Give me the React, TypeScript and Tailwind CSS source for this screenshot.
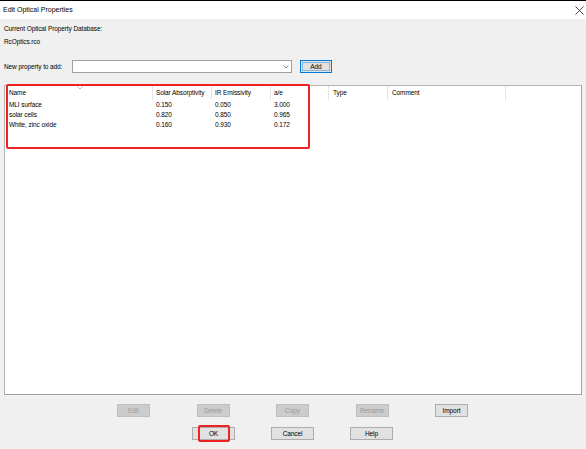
import React from "react";

const cols = [
  { name: "Name", w: 148, pl: 4 },
  { name: "Solar Absorptivity", w: 59, pl: 3 },
  { name: "IR Emissivity", w: 59, pl: 3 },
  { name: "a/e", w: 58, pl: 3 },
  { name: "Type", w: 59, pl: 4 },
  { name: "Comment", w: 118, pl: 4 },
];

const rows = [
  ["MLI surface", "0.150", "0.050", "3.000"],
  ["solar cells", "0.820", "0.850", "0.965"],
  ["White, zinc oxide", "0.160", "0.930", "0.172"],
];

function Btn({ label, disabled, w = 33 }: { label: string; disabled?: boolean; w?: number }) {
  return (
    <div
      style={{ width: w }}
      className={
        "h-[13px] flex items-center justify-center border " +
        (disabled
          ? "bg-[#cccccc] border-[#bfbfbf] text-[#9a9a9a]"
          : "bg-[#e1e1e1] border-[#adadad] text-black")
      }
    >
      {label}
    </div>
  );
}

export default function App() {
  return (
    <div
      className="w-[586px] h-[449px] bg-[#f0f0f0] flex flex-col overflow-hidden text-[6.5px] tracking-[-0.1px] text-black"
      style={{ fontFamily: '"Liberation Sans", Arial, sans-serif' }}
    >
      <div className="h-px bg-black" />
      <div className="h-[18px] bg-white flex items-center justify-between pl-[3px] pr-[3px]">
        <span className="text-[7px] tracking-normal">Edit Optical Properties</span>
        <svg width="9" height="9" viewBox="0 0 9 9" className="-mr-[1px]">
          <path d="M0.5 0.5 L8.5 8.5 M8.5 0.5 L0.5 8.5" stroke="#333" strokeWidth="0.9" />
        </svg>
      </div>
      <div className="flex flex-col pl-[4px] pr-[4px]">
        <div className="mt-[5px] h-[10px] leading-[10px]">Current Optical Property Database:</div>
        <div className="mt-[3px] h-[10px] leading-[10px]">RcOptics.rco</div>
        <div className="mt-[13px] h-[13px] flex items-center">
          <span className="w-[68px]">New property to add:</span>
          <div className="w-[220px] h-[13px] bg-white border border-[#a0a0a0] flex items-center justify-end pr-[2px]">
            <svg width="6" height="4" viewBox="0 0 6 4">
              <path d="M0.5 0.5 L3 3 L5.5 0.5" fill="none" stroke="#555" strokeWidth="0.7" />
            </svg>
          </div>
          <div className="ml-[8px] w-[32px] h-[13px] border border-[#0078d7] bg-[#e1e1e1] flex items-center justify-center">
            <div className="w-[28px] h-[9px] border border-[#0078d7]/40 flex items-center justify-center">Add</div>
          </div>
        </div>
        <div className="relative mt-[12px] w-[578px] h-[310px] bg-white border border-[#b4b4b4] border-r-[#a0a0a0] border-b-[#a0a0a0]">
          <div className="flex h-[14px] items-center">
            {cols.map((c) => (
              <div
                key={c.name}
                style={{ width: c.w, paddingLeft: c.pl }}
                className="h-full flex items-center border-r border-[#e5e5e5]"
              >
                {c.name}
              </div>
            ))}
          </div>
          {rows.map((r) => (
            <div key={r[0]} className="flex h-[10px] items-center">
              {r.map((v, i) => (
                <div key={i} style={{ width: cols[i].w, paddingLeft: cols[i].pl }}>
                  {v}
                </div>
              ))}
            </div>
          ))}
          <svg width="6" height="4" viewBox="0 0 6 4" className="absolute left-[72px] top-0">
            <path d="M0.5 0.5 L3 3 L5.5 0.5" fill="none" stroke="#999" strokeWidth="0.7" />
          </svg>
          <div className="absolute left-[1px] top-[-2px] w-[304px] h-[65px] border-2 border-[#ee2222] rounded-[2px]" />
        </div>
        <div className="mt-[9px] flex pl-[113px] gap-[46.5px]">
          <Btn label="Edit" disabled />
          <Btn label="Delete" disabled />
          <Btn label="Copy" disabled />
          <Btn label="Rename" disabled />
          <Btn label="Import" />
        </div>
        <div className="mt-[10px] flex pl-[188px] gap-[36px]">
          <div className="relative">
            <Btn label="OK" w={43} />
            <div className="absolute left-[6px] top-[-2px] w-[32px] h-[17px] border-2 border-[#ee2222] rounded-[2px]" />
          </div>
          <Btn label="Cancel" w={43} />
          <Btn label="Help" w={43} />
        </div>
      </div>
    </div>
  );
}
